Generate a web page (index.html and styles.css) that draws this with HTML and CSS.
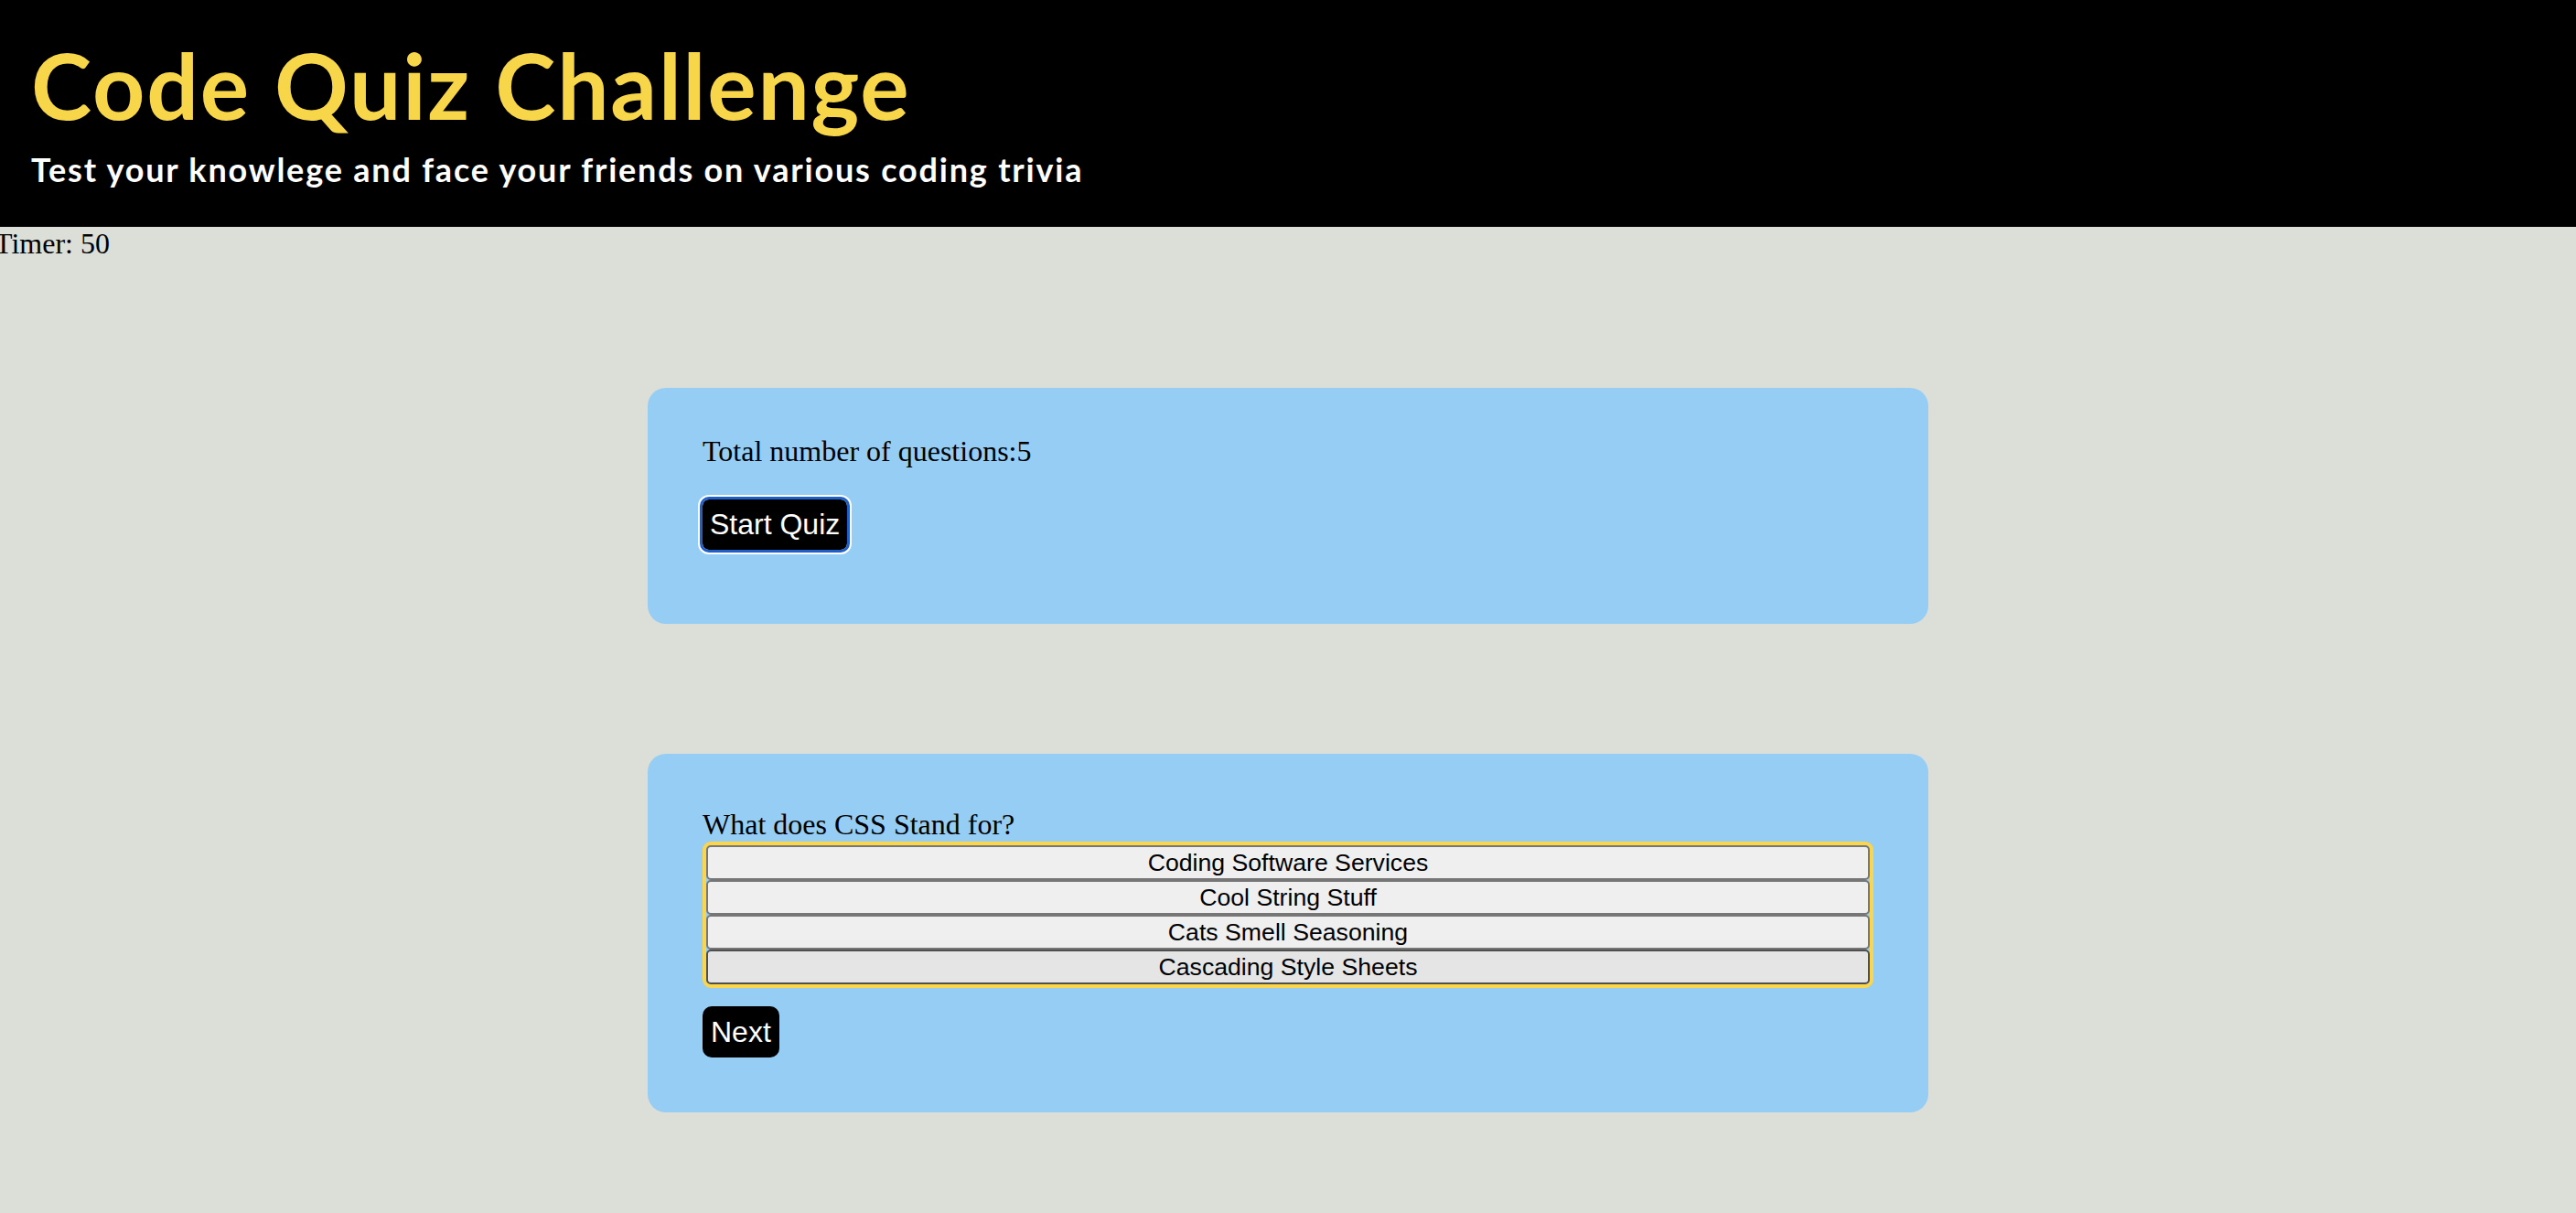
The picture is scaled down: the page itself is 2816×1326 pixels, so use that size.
FILE: index.html
```html
<!DOCTYPE html>
<html lang="en">
<head>
<meta charset="utf-8">
<title>Code Quiz Challenge</title>
<link rel="stylesheet" href="styles.css">
</head>
<body>
<header class="site-header">
  <h1 class="title">Code Quiz Challenge</h1>
  <p class="subtitle">Test your knowlege and face your friends on various coding trivia</p>
</header>
<div class="timer">Timer: 50</div>
<main class="main">
  <section class="card card-start">
    <p class="card-text">Total number of questions:5</p>
    <button class="btn btn-start" type="button">Start Quiz</button>
  </section>
  <section class="card card-question">
    <div class="question">What does CSS Stand for?</div>
    <div class="answers">
      <button class="answer" type="button">Coding Software Services</button>
      <button class="answer" type="button">Cool String Stuff</button>
      <button class="answer" type="button">Cats Smell Seasoning</button>
      <button class="answer answer-hover" type="button">Cascading Style Sheets</button>
    </div>
    <button class="btn btn-next" type="button">Next</button>
  </section>
</main>
</body>
</html>
```

FILE: styles.css
```css
* { box-sizing: border-box; }

html, body {
  margin: 0;
  padding: 0;
}

body {
  background: #dbdfd8;
  font-family: "Liberation Serif", "Times New Roman", serif;
  color: #000;
  min-height: 1326px;
}

.site-header {
  background: #000;
  padding: 42px 34px 45px;
  display: flex;
  flex-direction: column;
}

.title {
  margin: 0;
  font-family: "Lato", "Noto Sans", sans-serif;
  font-weight: 700;
  font-size: 100px;
  line-height: 100px;
  letter-spacing: 1.8px;
  color: #f8d64a;
}

.subtitle {
  margin: 25px 0 0;
  font-family: "Lato", "Noto Sans", sans-serif;
  font-weight: 700;
  font-size: 36px;
  line-height: 36px;
  letter-spacing: 1.8px;
  color: #fff;
}

.timer {
  font-size: 32px;
  line-height: 37px;
  margin-left: -6px;
}

.main {
  display: flex;
  flex-direction: column;
  align-items: center;
  padding-top: 139px;
  gap: 142px;
}

.card {
  width: 1400px;
  background: #96cdf5;
  border-radius: 20px;
  padding: 0 60px;
  display: flex;
  flex-direction: column;
  align-items: flex-start;
}

.card-start {
  padding-top: 51px;
  padding-bottom: 81px;
}

.card-text {
  margin: 0 0 34px;
  font-size: 32px;
  line-height: 37px;
}

.btn {
  background: #000;
  color: #fff;
  border: none;
  font-family: "Liberation Sans", Arial, sans-serif;
  font-size: 32px;
  line-height: 37px;
  padding: 9px 8px;
  cursor: pointer;
}

.btn-start {
  height: 55px;
  border-radius: 7px;
  outline: 3px solid #1f5fc9;
  box-shadow: 0 0 0 5px #fff;
}

.card-question {
  padding-top: 59px;
  padding-bottom: 60px;
}

.question {
  font-size: 32px;
  line-height: 37px;
}

.answers {
  width: 1280px;
  border: 4px solid #fbd54a;
  border-radius: 9px;
  display: flex;
  flex-direction: column;
}

.answer {
  height: 38px;
  width: 100%;
  background: #efefef;
  border: 2px solid #767676;
  border-radius: 5px;
  font-family: "Liberation Sans", Arial, sans-serif;
  font-size: 26.67px;
  line-height: 30px;
  padding: 0 12px;
  color: #000;
  text-align: center;
}

.answer-hover {
  background: #e5e5e5;
  border-color: #4f4f4f;
}

.btn-next {
  margin-top: 20px;
  height: 56px;
  border-radius: 10px;
  padding: 9px 9px;
}
```
